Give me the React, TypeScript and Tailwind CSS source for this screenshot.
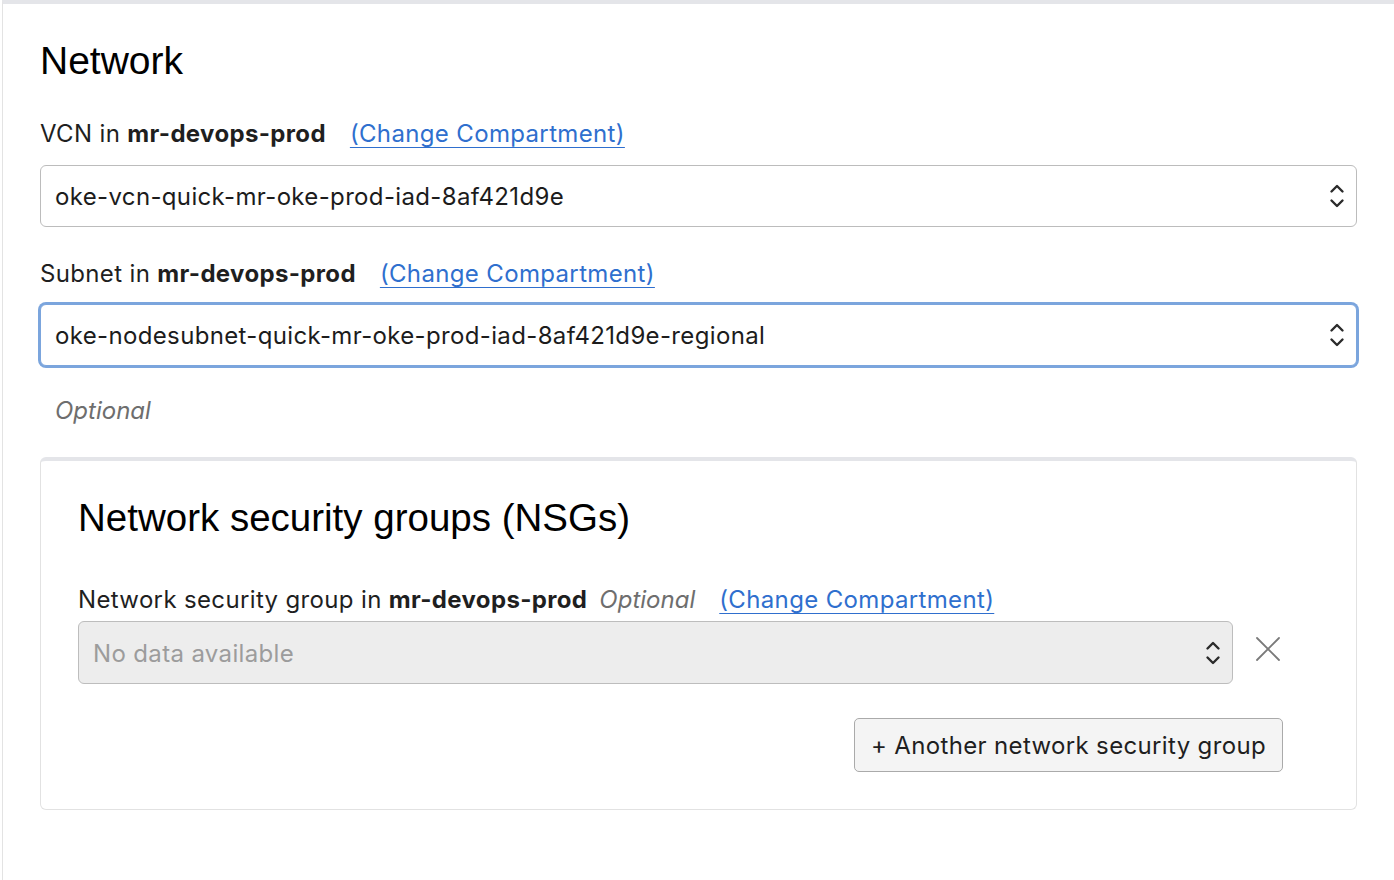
const body = "font-['Inter','Liberation_Sans',sans-serif] tracking-[0.35px]"
const heading = "font-['Liberation_Sans','Arial',sans-serif] tracking-normal"

function Chevrons() {
  return (
    <svg width="18" height="28" viewBox="0 0 18 28" fill="none" stroke="#2b2b2b" strokeWidth="2.4" strokeLinecap="round" strokeLinejoin="round">
      <path d="M3.5 9.5 L9 4 L14.5 9.5" />
      <path d="M3.5 18.5 L9 24 L14.5 18.5" />
    </svg>
  )
}

function ChangeLink() {
  return (
    <a href="#" className="text-[#2f6fce] underline decoration-1 underline-offset-[5px]">
      (Change Compartment)
    </a>
  )
}

function Select({ value, focused }: { value: string; focused?: boolean }) {
  return (
    <div
      className={
        focused
          ? "flex h-[62px] items-center justify-between rounded-[6px] border border-[#7ba5dd] bg-white pl-[14px] pr-[10px] ring-2 ring-[#7ba5dd]"
          : "flex h-[62px] items-center justify-between rounded-[6px] border border-[#bcbcbc] bg-white pl-[14px] pr-[10px]"
      }
    >
      <span className="pt-[2px] text-[24px] text-[#1c1c1c]">{value}</span>
      <Chevrons />
    </div>
  )
}

export default function App() {
  return (
    <div className={`min-h-screen bg-white ${body}`}>
      <div className="ml-[2px] min-h-[880px] border-l border-t-4 border-[#e4e5e9] border-l-[#e3e3e3] pb-10 pl-[37px] pr-[37px] pt-[34px]">
        <h1 className={`${heading} text-[39px] leading-[46px] text-black`}>Network</h1>

        <div className="mt-[35px] flex items-center gap-[24px] text-[24px] leading-[30px] text-[#1f1f1f]">
          <span>
            VCN in <b className="font-bold">mr-devops-prod</b>
          </span>
          <ChangeLink />
        </div>
        <div className="mt-[16px]">
          <Select value="oke-vcn-quick-mr-oke-prod-iad-8af421d9e" />
        </div>

        <div className="mt-[32px] flex items-center gap-[24px] text-[24px] leading-[30px] text-[#1f1f1f]">
          <span>
            Subnet in <b className="font-bold">mr-devops-prod</b>
          </span>
          <ChangeLink />
        </div>
        <div className="mt-[15px]">
          <Select value="oke-nodesubnet-quick-mr-oke-prod-iad-8af421d9e-regional" focused />
        </div>

        <p className="mt-[30px] pl-[15px] text-[24px] italic leading-[30px] tracking-normal text-[#6e6e6e]">Optional</p>

        <section className="mt-[31px] rounded-[6px] border border-t-4 border-[#e2e2e2] border-t-[#e4e5e9] pb-[37px] pl-[37px] pr-[73px] pt-[34px]">
          <h2 className={`${heading} text-[38.5px] leading-[46px] text-black`}>Network security groups (NSGs)</h2>

          <div className="mt-[44px] flex items-center gap-[24px] text-[24px] leading-[30px] text-[#1f1f1f]">
            <span>
              Network security group in <b className="font-bold">mr-devops-prod</b>
              <i className="ml-[12px] tracking-normal text-[#6e6e6e]">Optional</i>
            </span>
            <ChangeLink />
          </div>

          <div className="mt-[6px] flex items-center gap-[20px]">
            <div className="flex h-[63px] flex-1 items-center justify-between rounded-[6px] border border-[#bdbdbd] bg-[#ededed] pl-[14px] pr-[10px]">
              <span className="pt-[2px] text-[24px] text-[#9c9c9c]">No data available</span>
              <Chevrons />
            </div>
            <svg width="30" height="30" viewBox="0 0 30 30" className="mb-[8px]" stroke="#7a7a7a" strokeWidth="1.8" strokeLinecap="round">
              <path d="M4 4 L26 26" />
              <path d="M26 4 L4 26" />
            </svg>
          </div>

          <div className="mt-[34px] flex justify-end">
            <button className="h-[54px] rounded-[5px] border border-[#aaaaaa] bg-[#f4f4f4] px-[16px] pt-[2px] text-[24px] text-[#1f1f1f]">
              + Another network security group
            </button>
          </div>
        </section>
      </div>
    </div>
  )
}
